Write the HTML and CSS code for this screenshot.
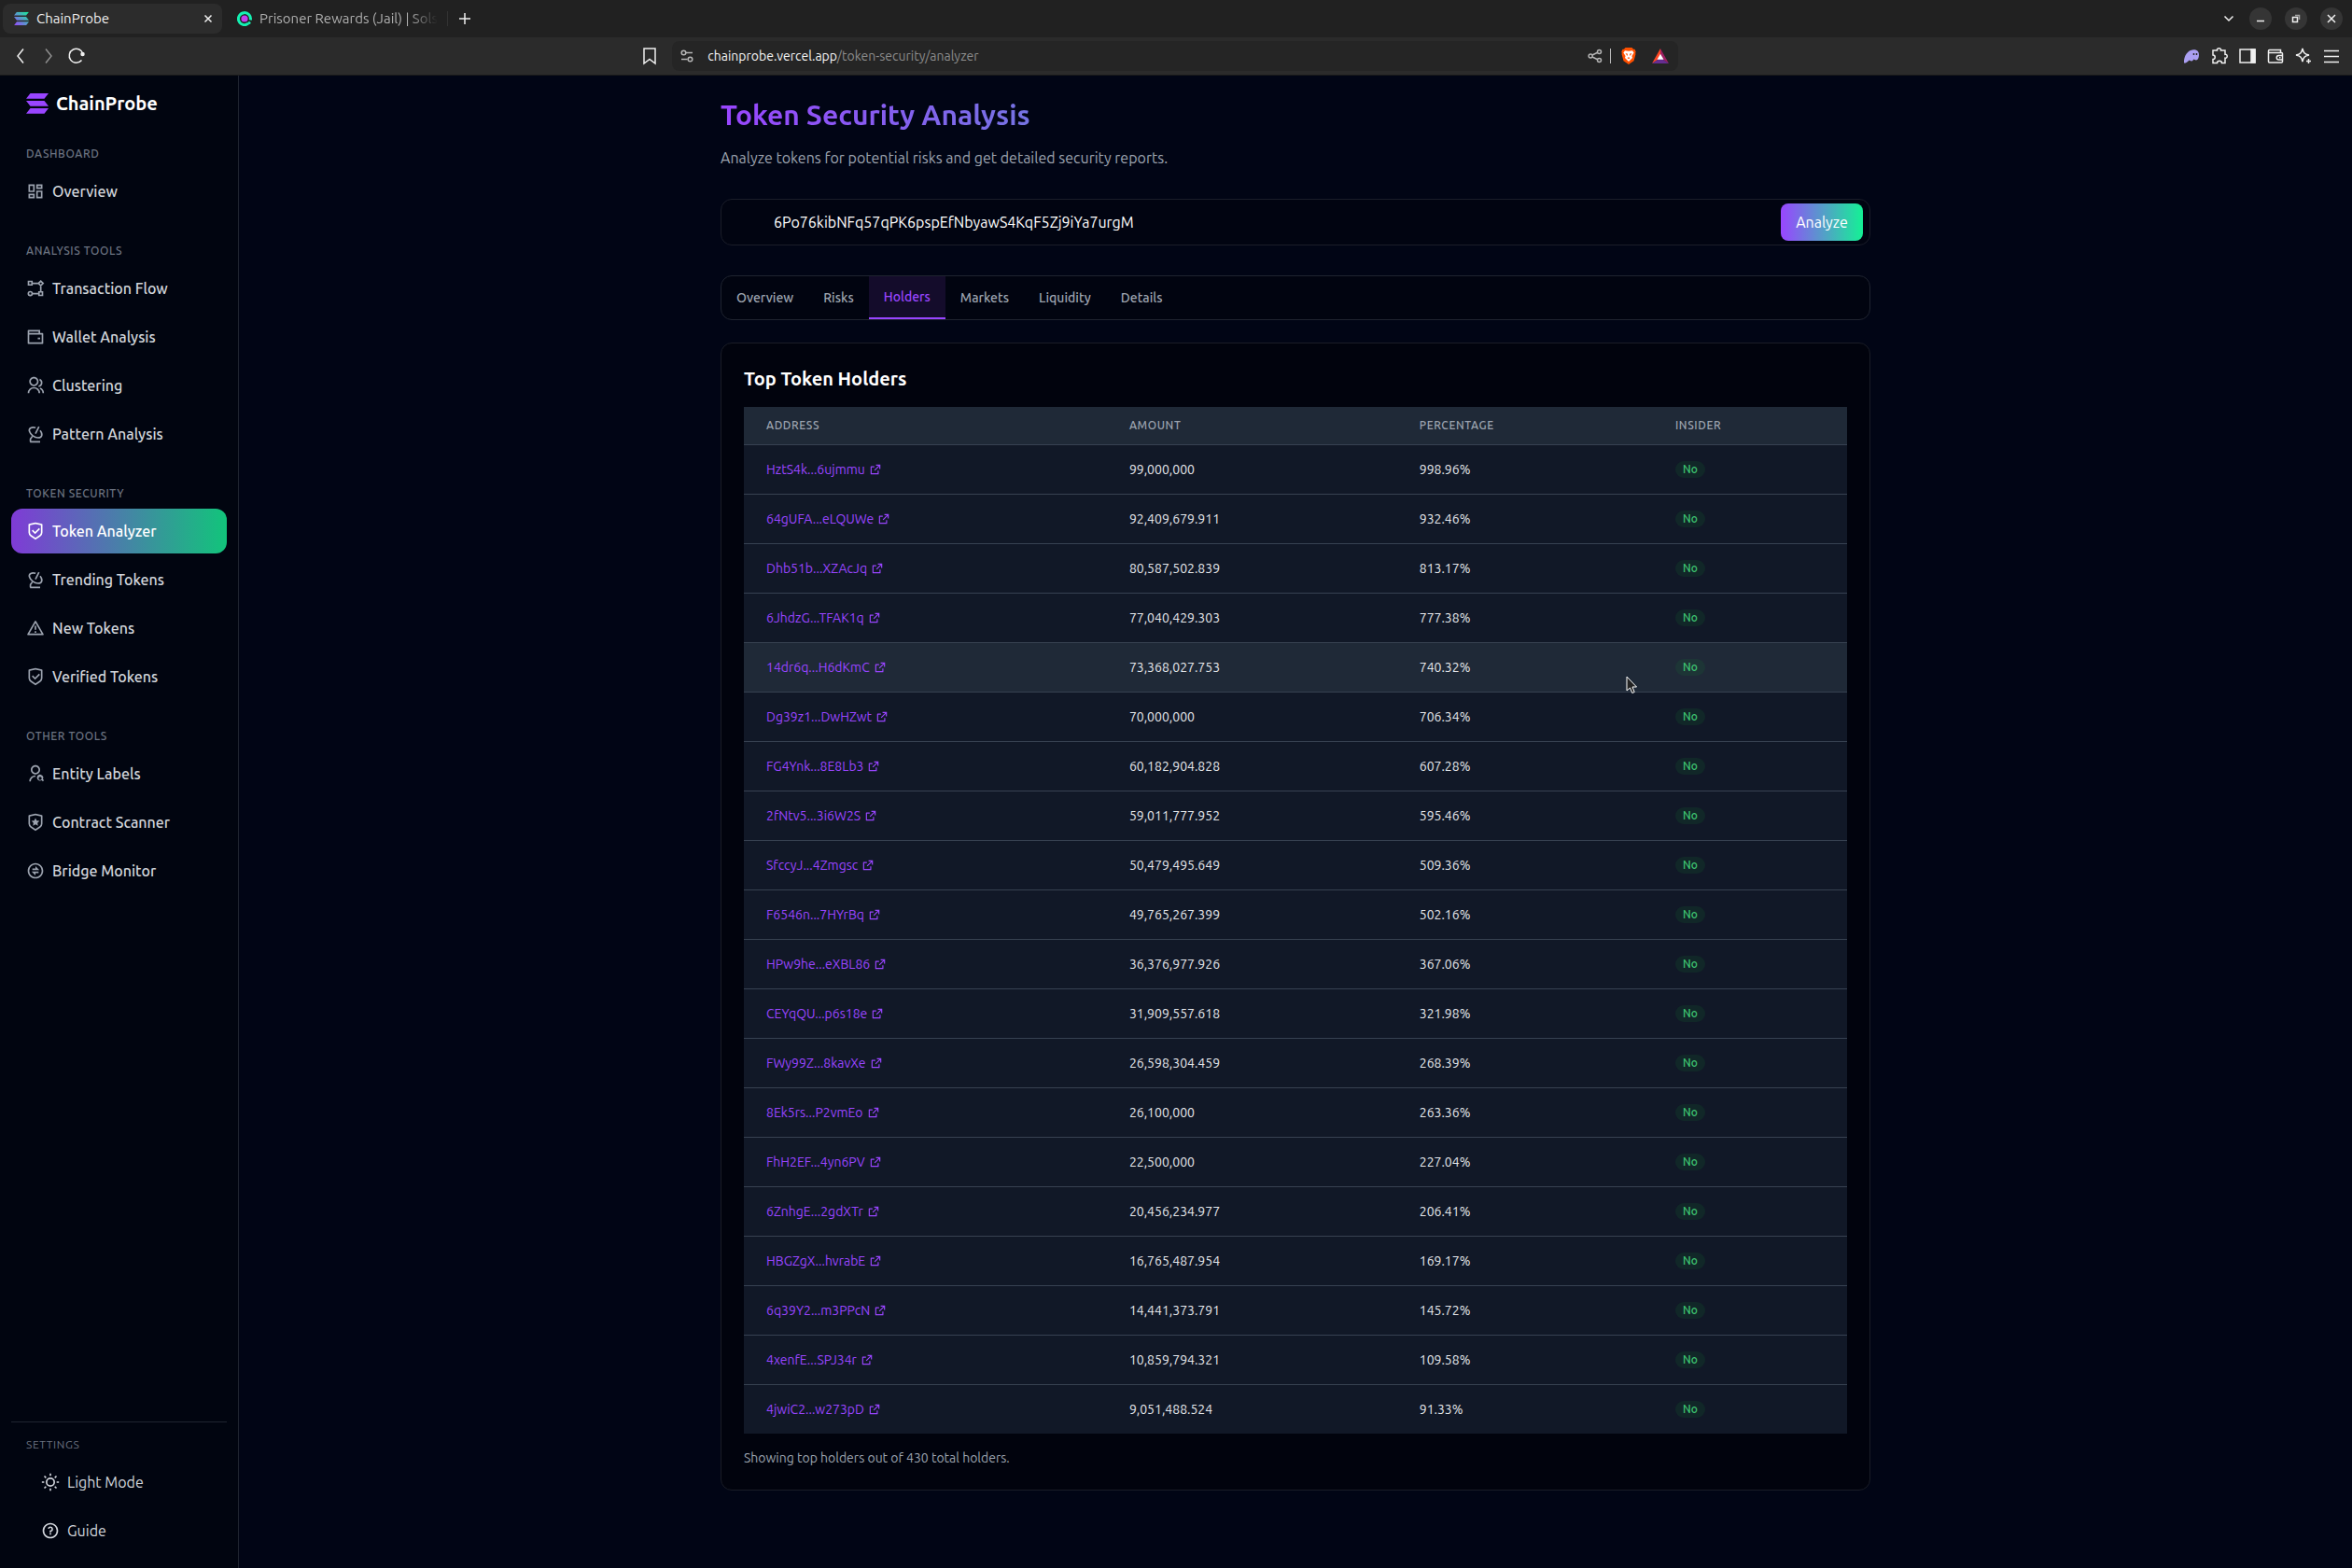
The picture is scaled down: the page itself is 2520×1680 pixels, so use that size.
FILE: index.html
```html
<!DOCTYPE html>
<html lang="en">
<head>
  <meta charset="UTF-8">
  <meta name="viewport" content="width=device-width, initial-scale=1.0">
  <title>ChainProbe</title>
  <link rel="stylesheet" href="styles.css">
</head>
<body>
  <!-- Shared icons -->
  <svg class="sprite" aria-hidden="true">
    <defs>
      <linearGradient id="solana" x1="0" y1="1" x2="1" y2="0">
        <stop offset="0" stop-color="#9945ff"/>
        <stop offset="1" stop-color="#14f195"/>
      </linearGradient>
    </defs>
    <symbol id="i-logo" viewBox="0 0 24 22"><path d="M4.5 0H24l-4.500 5.700H0zM0 8h19.500L24 13.700H4.500zM4.500 16H24l-4.500 5.700H0z"/></symbol>
    <symbol id="i-dashboard" viewBox="0 0 24 24"><path d="M13 21V11h8v10h-8zM3 13V3h8v10H3zm6-2V5H5v6h4zM3 21v-6h8v6H3zm2-2h4v-2H5v2zm10 0h4v-6h-4v6zM13 3h8v6h-8V3zm2 2v2h4V5h-4z"/></symbol>
    <symbol id="i-flow" viewBox="0 0 24 24"><g fill="none" stroke="currentColor" stroke-width="2"><path d="M3 3h4.500v4.500H3zM16.500 16.500H21V21h-4.500zM7.500 5.500h8M18.800 8v8.500M8 18.800h8.500M18.800 2.500l3 3-3 3-3-3z"/><circle cx="5.300" cy="18.700" r="2.500"/></g></symbol>
    <symbol id="i-wallet" viewBox="0 0 24 24"><path d="M18 7h3a1 1 0 0 1 1 1v12a1 1 0 0 1-1 1H3a1 1 0 0 1-1-1V4a1 1 0 0 1 1-1h15v4zM4 9v10h16V9H4zm0-4v2h12V5H4zm11 8h3v2h-3v-2z"/></symbol>
    <symbol id="i-group" viewBox="0 0 24 24"><path d="M2 22a8 8 0 1 1 16 0h-2a6 6 0 1 0-12 0H2zm8-9c-3.315 0-6-2.685-6-6s2.685-6 6-6 6 2.685 6 6-2.685 6-6 6zm0-2c2.210 0 4-1.790 4-4s-1.790-4-4-4-4 1.790-4 4 1.790 4 4 4zm8.284 3.703A8.002 8.002 0 0 1 23 22h-2a6.001 6.001 0 0 0-3.537-5.473l.82-1.824zm-.688-11.290A5.500 5.500 0 0 1 21 8.500a5.499 5.499 0 0 1-5 5.478v-2.013a3.500 3.500 0 0 0 1.041-6.609l.555-1.943z"/></symbol>
    <symbol id="i-radar" viewBox="0 0 24 24"><path fill="none" stroke="currentColor" stroke-width="2" d="M12.200 4C7.500 2.300 3 4.600 4.200 8.500c1.200 4 6.500 8.300 11.200 8.300 4.900 0 6.600-4.300 2.600-9.300M12 11.500l4.500-9M5 22h13M5.500 22v-3.500c0-1 1.500-1 2.300-3.500"/></symbol>
    <symbol id="i-shield" viewBox="0 0 24 24"><path d="M12 1l8.217 1.826a1 1 0 0 1 .783.976v9.987a6 6 0 0 1-2.672 4.992L12 23l-6.328-4.219A6 6 0 0 1 3 13.790V3.802a1 1 0 0 1 .783-.976L12 1zm0 2.049L5 4.604v9.185a4 4 0 0 0 1.781 3.328L12 20.597l5.219-3.480A4 4 0 0 0 19 13.790V4.604L12 3.050zm4.452 5.173l1.415 1.414L11.503 16 7.260 11.757l1.414-1.414 2.828 2.828 4.950-4.950z"/></symbol>
    <symbol id="i-shield-star" viewBox="0 0 24 24"><path d="M12 1l8.217 1.826a1 1 0 0 1 .783.976v9.987a6 6 0 0 1-2.672 4.992L12 23l-6.328-4.219A6 6 0 0 1 3 13.790V3.802a1 1 0 0 1 .783-.976L12 1zm0 2.049L5 4.604v9.185a4 4 0 0 0 1.781 3.328L12 20.597l5.219-3.480A4 4 0 0 0 19 13.790V4.604L12 3.050z"/><path d="M12 6.500l1.600 3.300 3.600.5-2.600 2.500.6 3.600-3.200-1.700-3.200 1.700.6-3.600-2.600-2.500 3.600-.5z"/></symbol>
    <symbol id="i-alert" viewBox="0 0 24 24"><path d="M12.866 3l9.526 16.500a1 1 0 0 1-.866 1.500H2.474a1 1 0 0 1-.866-1.500L11.134 3a1 1 0 0 1 1.732 0zm-8.660 16h15.588L12 5.500 4.206 19zM11 16h2v2h-2v-2zm0-7h2v5h-2V9z"/></symbol>
    <symbol id="i-user-search" viewBox="0 0 24 24"><path d="M12 14v2a6 6 0 0 0-6 6H4a8 8 0 0 1 8-8zm0-1c-3.315 0-6-2.685-6-6s2.685-6 6-6 6 2.685 6 6-2.685 6-6 6zm0-2c2.210 0 4-1.790 4-4s-1.790-4-4-4-4 1.790-4 4 1.790 4 4 4zm9.446 8.032l1.504 1.503-1.415 1.415-1.503-1.504a4 4 0 1 1 1.414-1.414zM18 20a2 2 0 1 0 0-4 2 2 0 0 0 0 4z"/></symbol>
    <symbol id="i-exchange" viewBox="0 0 24 24"><path d="M12 22C6.477 22 2 17.523 2 12S6.477 2 12 2s10 4.477 10 10-4.477 10-10 10zm0-2a8 8 0 1 0 0-16 8 8 0 0 0 0 16zm-5-7h9v2h-4v3l-5-5zm5-4V6l5 5H8V9h4z"/></symbol>
    <symbol id="i-sun" viewBox="0 0 24 24"><path d="M12 18a6 6 0 1 1 0-12 6 6 0 0 1 0 12zm0-2a4 4 0 1 0 0-8 4 4 0 0 0 0 8zM11 1h2v3h-2V1zm0 19h2v3h-2v-3zM3.515 4.929l1.414-1.414L7.050 5.636 5.636 7.050 3.515 4.930zM16.950 18.364l1.414-1.414 2.121 2.121-1.414 1.414-2.121-2.121zm2.121-14.850l1.414 1.415-2.121 2.121-1.414-1.414 2.121-2.121zM5.636 16.950l1.414 1.414-2.121 2.121-1.414-1.414 2.121-2.121zM23 11v2h-3v-2h3zM4 11v2H1v-2h3z"/></symbol>
    <symbol id="i-question" viewBox="0 0 24 24"><path d="M12 22C6.477 22 2 17.523 2 12S6.477 2 12 2s10 4.477 10 10-4.477 10-10 10zm0-2a8 8 0 1 0 0-16 8 8 0 0 0 0 16zm-1-5h2v2h-2v-2zm2-1.645V14h-2v-1.500a1 1 0 0 1 1-1 1.500 1.500 0 1 0-1.471-1.794l-1.962-.393A3.501 3.501 0 1 1 13 13.355z"/></symbol>
    <symbol id="i-link" viewBox="0 0 24 24"><path d="M10 6v2H5v11h11v-5h2v6a1 1 0 0 1-1 1H4a1 1 0 0 1-1-1V7a1 1 0 0 1 1-1h6zm11-3v8h-2V6.413l-7.793 7.794-1.414-1.414L17.585 5H13V3h8z"/></symbol>
  </svg>

  <div class="browser">
    <div class="tab-bar">
      <div class="tab tab-active">
        <svg class="tab-icon" viewBox="0 0 24 22"><use href="#i-logo" fill="url(#solana)"/></svg>
        <span class="tab-title">ChainProbe</span>
        <button class="tab-close" aria-label="Close tab"><svg viewBox="0 0 10 10"><path d="M1.500 1.500l7 7M8.500 1.500l-7 7"/></svg></button>
      </div>
      <div class="tab tab-other">
        <svg class="tab-icon" viewBox="0 0 16 16"><path d="M12 13.200A6.500 6.500 0 1 1 14.300 9.500" fill="none" stroke="#14f1b2" stroke-width="3"/><circle cx="8" cy="8" r="3.600" fill="#c13ff0"/><circle cx="13" cy="12.500" r="1.600" fill="#14f1b2"/></svg>
        <span class="tab-title tab-fade">Prisoner Rewards (Jail) | Sols</span>
      </div>
      <button class="new-tab" aria-label="New tab"><svg viewBox="0 0 12 12"><path d="M6 0v12M0 6h12"/></svg></button>
      <div class="window-controls">
        <button class="chevron" aria-label="Search tabs"><svg viewBox="0 0 12 12"><path d="M1.500 3.500L6 8l4.500-4.500"/></svg></button>
        <button aria-label="Minimize"><svg viewBox="0 0 12 12"><path d="M2 8.500h8"/></svg></button>
        <button aria-label="Restore"><svg viewBox="0 0 12 12"><path d="M2.500 4.500h5v5h-5z"/><path d="M5 2.500h4.500V7" opacity=".6"/></svg></button>
        <button aria-label="Close"><svg viewBox="0 0 12 12"><path d="M2 2l8 8M10 2l-8 8"/></svg></button>
      </div>
    </div>

    <div class="toolbar">
      <div class="toolbar-nav">
        <button aria-label="Back"><svg viewBox="0 0 20 20"><path d="M13 2.500L7 10l6 7.500"/></svg></button>
        <button class="dim" aria-label="Forward"><svg viewBox="0 0 20 20"><path d="M7 2.500l6 7.500-6 7.500"/></svg></button>
        <button aria-label="Reload"><svg viewBox="0 0 20 20"><path d="M15.500 14.500a7.500 7.500 0 1 1 1.500-6.500"/><circle cx="16.500" cy="8" r="1.500" fill="currentColor"/></svg></button>
      </div>
      <div class="toolbar-address">
        <button class="bookmark" aria-label="Bookmark"><svg viewBox="0 0 20 20"><path d="M4 2h12v16l-6-4.500L4 18z"/></svg></button>
        <div class="url-bar">
          <svg class="url-icon" viewBox="0 0 16 16"><circle cx="4.500" cy="4.500" r="2.300"/><path d="M7 4.500h7M2 11.500h6.500"/><circle cx="11.500" cy="11.500" r="2.300"/></svg>
          <div class="url"><span class="url-host">chainprobe.vercel.app</span>/token-security/analyzer</div>
          <svg class="url-icon" viewBox="0 0 16 16"><circle cx="3.200" cy="8" r="2"/><circle cx="12.500" cy="3.500" r="2"/><circle cx="12.500" cy="12.500" r="2"/><path d="M5 7l5.700-2.700M5 9l5.700 2.700"/></svg>
          <span class="url-divider"></span>
          <svg class="brave" viewBox="0 0 16 18"><path d="M4.500 0h7l1.600 1.800h1.400l1.200 2.700-.5 1.500.3 1-2 7.200L8 18l-5.500-3.800L.5 7l.3-1L.3 4.500l1.200-2.700h1.400z" fill="#ff5000"/><path d="M4 3.200l4 .6 4-.6 1.600 2.300-2.200 3.500.6 2L8 15l-4-4 .6-2-2.200-3.500z" fill="#fff"/><path d="M4.500 6l2.500.8L6.500 9zM11.500 6L9 6.800l.5 2.200zM6.500 11L8 10.200 9.500 11 8 12.200z" fill="#ff5000"/></svg>
          <svg class="bat" viewBox="0 0 18 16"><path d="M9 0L0 16l9-6z" fill="#ff4724"/><path d="M9 0l9 16-9-6z" fill="#9e1f63"/><path d="M0 16h18l-9-6z" fill="#662d91"/><path d="M9 5.800l3.500 6h-7z" fill="#fff"/></svg>
        </div>
      </div>
      <div class="toolbar-extensions">
        <button aria-label="Phantom"><svg viewBox="0 0 20 20"><path d="M2 17.500C1.500 10 6 3.500 12 3.200c4.500-.2 6.300 2.600 6 6.300-.2 2.500-1.200 5-3 5-1.500 0-1.600-1-2.200-1-.8 0-1.300 2-2.800 2-1.300 0-1.500-1-2.200-1-1 0-2.300 3.500-5.800 3z" fill="#ab9ff2" stroke="none"/><path d="M12.500 7v2M15.500 7v2" stroke="#2b2b2b"/></svg></button>
        <button aria-label="Extensions"><svg viewBox="0 0 20 20"><path d="M3 4h4.500c-.8-3 4.800-3 4 0H16v4.300c3-.6 3 4.400 0 3.900V17.500h-3.500c0-3-5-3-5 0H3v-4c3 0 3-4.500 0-4.500z"/></svg></button>
        <button aria-label="Side panel"><svg viewBox="0 0 20 20"><path d="M2 3h16v14H2z"/><path d="M14 3h4v14h-4z" fill="currentColor"/></svg></button>
        <button aria-label="Wallet"><svg viewBox="0 0 20 20"><path d="M3 6.500h13.500a1 1 0 0 1 1 1V16a1 1 0 0 1-1 1h-13a1 1 0 0 1-1-1V4.500a1 1 0 0 1 1-1h12v3M17.500 9.500h-4a2 2 0 0 0 0 4.500h4M14 11.700h1.500"/></svg></button>
        <button aria-label="Leo AI"><svg viewBox="0 0 20 20"><path d="M9 2c.8 4.500 2 6 7 7-5 1-6.200 2.500-7 7-.8-4.500-2-6-7-7 5-1 6.200-2.500 7-7zM15.500 13v5M13 15.500h5"/></svg></button>
        <button aria-label="Menu"><svg viewBox="0 0 20 20"><path d="M2 4.500h16M2 10.500h16M2 16.500h16"/></svg></button>
      </div>
    </div>
  </div>

  <div class="app">
    <aside class="sidebar">
      <a class="brand" href="#"><svg class="brand-logo"><use href="#i-logo"/></svg>ChainProbe</a>
      <nav class="nav">
        <section class="nav-section">
          <h3 class="nav-label">Dashboard</h3>
          <a class="nav-item" href="#"><svg class="icon"><use href="#i-dashboard"/></svg>Overview</a>
        </section>
        <section class="nav-section">
          <h3 class="nav-label">Analysis Tools</h3>
          <a class="nav-item" href="#"><svg class="icon"><use href="#i-flow"/></svg>Transaction Flow</a>
          <a class="nav-item" href="#"><svg class="icon"><use href="#i-wallet"/></svg>Wallet Analysis</a>
          <a class="nav-item" href="#"><svg class="icon"><use href="#i-group"/></svg>Clustering</a>
          <a class="nav-item" href="#"><svg class="icon"><use href="#i-radar"/></svg>Pattern Analysis</a>
        </section>
        <section class="nav-section">
          <h3 class="nav-label">Token Security</h3>
          <a class="nav-item active" href="#"><svg class="icon"><use href="#i-shield"/></svg>Token Analyzer</a>
          <a class="nav-item" href="#"><svg class="icon"><use href="#i-radar"/></svg>Trending Tokens</a>
          <a class="nav-item" href="#"><svg class="icon"><use href="#i-alert"/></svg>New Tokens</a>
          <a class="nav-item" href="#"><svg class="icon"><use href="#i-shield"/></svg>Verified Tokens</a>
        </section>
        <section class="nav-section">
          <h3 class="nav-label">Other Tools</h3>
          <a class="nav-item" href="#"><svg class="icon"><use href="#i-user-search"/></svg>Entity Labels</a>
          <a class="nav-item" href="#"><svg class="icon"><use href="#i-shield-star"/></svg>Contract Scanner</a>
          <a class="nav-item" href="#"><svg class="icon"><use href="#i-exchange"/></svg>Bridge Monitor</a>
        </section>
      </nav>
      <div class="settings">
        <h3 class="nav-label">Settings</h3>
        <div class="settings-items">
          <button class="nav-item"><svg class="icon"><use href="#i-sun"/></svg>Light Mode</button>
          <button class="nav-item"><svg class="icon"><use href="#i-question"/></svg>Guide</button>
        </div>
      </div>
    </aside>

    <main class="main">
      <div class="container">
        <h1 class="title">Token Security Analysis</h1>
        <p class="subtitle">Analyze tokens for potential risks and get detailed security reports.</p>

        <form class="search">
          <input class="search-input" type="text" aria-label="Token address" value="6Po76kibNFq57qPK6pspEfNbyawS4KqF5Zj9iYa7urgM">
          <button class="analyze" type="button">Analyze</button>
        </form>

        <div class="tabs">
          <button class="tabs-item">Overview</button>
          <button class="tabs-item">Risks</button>
          <button class="tabs-item selected">Holders</button>
          <button class="tabs-item">Markets</button>
          <button class="tabs-item">Liquidity</button>
          <button class="tabs-item">Details</button>
        </div>

        <section class="card">
          <h2 class="card-title">Top Token Holders</h2>
          <table class="holders">
            <colgroup><col class="col-address"><col class="col-amount"><col class="col-percentage"><col></colgroup>
            <thead>
              <tr><th>Address</th><th>Amount</th><th>Percentage</th><th>Insider</th></tr>
            </thead>
            <tbody>
              <tr><td><a href="#">HztS4k...6ujmmu<svg><use href="#i-link"/></svg></a></td><td>99,000,000</td><td>998.96%</td><td><span class="badge">No</span></td></tr>
              <tr><td><a href="#">64gUFA...eLQUWe<svg><use href="#i-link"/></svg></a></td><td>92,409,679.911</td><td>932.46%</td><td><span class="badge">No</span></td></tr>
              <tr><td><a href="#">Dhb51b...XZAcJq<svg><use href="#i-link"/></svg></a></td><td>80,587,502.839</td><td>813.17%</td><td><span class="badge">No</span></td></tr>
              <tr><td><a href="#">6JhdzG...TFAK1q<svg><use href="#i-link"/></svg></a></td><td>77,040,429.303</td><td>777.38%</td><td><span class="badge">No</span></td></tr>
              <tr class="hovered"><td><a href="#">14dr6q...H6dKmC<svg><use href="#i-link"/></svg></a></td><td>73,368,027.753</td><td>740.32%</td><td><span class="badge">No</span></td></tr>
              <tr><td><a href="#">Dg39z1...DwHZwt<svg><use href="#i-link"/></svg></a></td><td>70,000,000</td><td>706.34%</td><td><span class="badge">No</span></td></tr>
              <tr><td><a href="#">FG4Ynk...8E8Lb3<svg><use href="#i-link"/></svg></a></td><td>60,182,904.828</td><td>607.28%</td><td><span class="badge">No</span></td></tr>
              <tr><td><a href="#">2fNtv5...3i6W2S<svg><use href="#i-link"/></svg></a></td><td>59,011,777.952</td><td>595.46%</td><td><span class="badge">No</span></td></tr>
              <tr><td><a href="#">SfccyJ...4Zmgsc<svg><use href="#i-link"/></svg></a></td><td>50,479,495.649</td><td>509.36%</td><td><span class="badge">No</span></td></tr>
              <tr><td><a href="#">F6546n...7HYrBq<svg><use href="#i-link"/></svg></a></td><td>49,765,267.399</td><td>502.16%</td><td><span class="badge">No</span></td></tr>
              <tr><td><a href="#">HPw9he...eXBL86<svg><use href="#i-link"/></svg></a></td><td>36,376,977.926</td><td>367.06%</td><td><span class="badge">No</span></td></tr>
              <tr><td><a href="#">CEYqQU...p6s18e<svg><use href="#i-link"/></svg></a></td><td>31,909,557.618</td><td>321.98%</td><td><span class="badge">No</span></td></tr>
              <tr><td><a href="#">FWy99Z...8kavXe<svg><use href="#i-link"/></svg></a></td><td>26,598,304.459</td><td>268.39%</td><td><span class="badge">No</span></td></tr>
              <tr><td><a href="#">8Ek5rs...P2vmEo<svg><use href="#i-link"/></svg></a></td><td>26,100,000</td><td>263.36%</td><td><span class="badge">No</span></td></tr>
              <tr><td><a href="#">FhH2EF...4yn6PV<svg><use href="#i-link"/></svg></a></td><td>22,500,000</td><td>227.04%</td><td><span class="badge">No</span></td></tr>
              <tr><td><a href="#">6ZnhgE...2gdXTr<svg><use href="#i-link"/></svg></a></td><td>20,456,234.977</td><td>206.41%</td><td><span class="badge">No</span></td></tr>
              <tr><td><a href="#">HBGZgX...hvrabE<svg><use href="#i-link"/></svg></a></td><td>16,765,487.954</td><td>169.17%</td><td><span class="badge">No</span></td></tr>
              <tr><td><a href="#">6q39Y2...m3PPcN<svg><use href="#i-link"/></svg></a></td><td>14,441,373.791</td><td>145.72%</td><td><span class="badge">No</span></td></tr>
              <tr><td><a href="#">4xenfE...SPJ34r<svg><use href="#i-link"/></svg></a></td><td>10,859,794.321</td><td>109.58%</td><td><span class="badge">No</span></td></tr>
              <tr><td><a href="#">4jwiC2...w273pD<svg><use href="#i-link"/></svg></a></td><td>9,051,488.524</td><td>91.33%</td><td><span class="badge">No</span></td></tr>
            </tbody>
          </table>
          <p class="card-note">Showing top holders out of 430 total holders.</p>
        </section>
      </div>
    </main>
  </div>

  <svg class="cursor" viewBox="0 0 12 20"><path d="M1 1v15l3.500-3 2.300 5.500 2.400-1L7 12h4.500z"/></svg>
</body>
</html>
```
FILE: styles.css
```css
* {
  box-sizing: border-box;
}

body {
  margin: 0;
  height: 100vh;
  display: flex;
  flex-direction: column;
  background: #010515;
  color: #fff;
  font-family: Ubuntu, Roboto, sans-serif;
  font-size: 16px;
  line-height: 24px;
}

h1, h2, h3, p {
  margin: 0;
}

a {
  color: inherit;
  text-decoration: none;
}

button {
  font: inherit;
  color: inherit;
  background: none;
  border: 0;
  padding: 0;
  cursor: pointer;
}

svg {
  display: block;
  flex-shrink: 0;
  fill: currentColor;
}

.sprite {
  position: absolute;
  width: 0;
  height: 0;
}

/* Browser frame */
.browser {
  background: #2b2b2b;
  border-bottom: 1px solid #1a1a1a;
  color: #f0f0f0;
  font-size: 15px;
}

.browser button {
  display: flex;
  align-items: center;
  justify-content: center;
}

.browser button svg {
  fill: none;
  stroke: currentColor;
  stroke-width: 1.5;
}

.tab-bar {
  display: flex;
  align-items: center;
  height: 40px;
  padding: 0 10px 0 3px;
  background: #212121;
}

.tab {
  display: flex;
  align-items: center;
  height: 32px;
  padding: 0 10px 0 12px;
  border-radius: 8px;
}

.tab-active {
  width: 235px;
  background: #2c2c2c;
}

.tab-other {
  width: 237px;
  margin-left: 4px;
  color: #b0b0b0;
}

.tab-icon {
  width: 16px;
  height: 16px;
  margin-right: 8px;
}

.tab-title {
  flex: 1;
  overflow: hidden;
  white-space: nowrap;
}

.tab-fade {
  mask-image: linear-gradient(to right, #000 84%, transparent);
}

.tab-close svg {
  width: 10px;
  height: 10px;
}

.browser .new-tab {
  width: 36px;
  height: 16px;
  border-left: 1px solid #333;
}

.new-tab svg {
  width: 12px;
  height: 12px;
}

.window-controls {
  display: flex;
  gap: 14px;
  margin-left: auto;
}

.window-controls button {
  width: 24px;
  height: 24px;
  border-radius: 50%;
  background: #353535;
}

.window-controls .chevron {
  margin-right: -4px;
  background: none;
}

.window-controls svg {
  width: 12px;
  height: 12px;
}

.toolbar {
  display: grid;
  grid-template-columns: 19fr minmax(0, 1112px) 20fr;
  align-items: center;
  height: 40px;
  padding: 0 12px;
}

.toolbar-nav,
.toolbar-extensions {
  display: flex;
  gap: 10px;
}

.toolbar-extensions {
  justify-content: flex-end;
}

.toolbar button svg {
  width: 20px;
  height: 20px;
}

.dim {
  opacity: 0.5;
}

.toolbar-address {
  display: flex;
  align-items: center;
  gap: 14px;
}

.url-bar {
  flex: 1;
  display: flex;
  align-items: center;
  height: 32px;
  padding: 0 10px 0 8px;
  background: #252525;
  border-radius: 8px;
}

.url-icon {
  width: 16px;
  height: 16px;
  fill: none;
  stroke: #b5b5b5;
  stroke-width: 1.5;
}

.url {
  flex: 1;
  padding-left: 14px;
  font-size: 14px;
  color: #8c8c8c;
}

.url-host {
  color: #f5f5f5;
}

.url-divider {
  width: 1px;
  height: 16px;
  margin: 0 11px 0 8px;
  background: #bdbdbd;
}

.brave {
  width: 16px;
  height: 18px;
  margin-right: 17px;
}

.bat {
  width: 18px;
  height: 16px;
}

/* App */
.app {
  flex: 1;
  display: flex;
  min-height: 0;
}

.sidebar {
  width: 256px;
  flex-shrink: 0;
  display: flex;
  flex-direction: column;
  background: #010510;
  border-right: 1px solid #1f2430;
}

.brand {
  display: flex;
  align-items: center;
  gap: 8px;
  height: 60px;
  padding: 0 28px;
  font-size: 20px;
  font-weight: 700;
}

.brand-logo {
  width: 24px;
  height: 22px;
  color: #9945ff;
}

.nav {
  flex: 1;
  display: flex;
  flex-direction: column;
  gap: 32px;
  padding: 16px 12px;
}

.nav-section,
.settings-items {
  display: flex;
  flex-direction: column;
  gap: 4px;
}

.nav-label {
  margin-bottom: 4px;
  padding: 0 16px;
  font-size: 12px;
  font-weight: 500;
  line-height: 16px;
  letter-spacing: 0.05em;
  text-transform: uppercase;
  color: #6b7280;
}

.nav-item {
  display: flex;
  align-items: center;
  gap: 8px;
  height: 48px;
  padding: 0 16px;
  border-radius: 12px;
  font-weight: 500;
  color: #d1d5db;
}

.icon {
  width: 20px;
  height: 20px;
  color: #9ca3af;
}

.nav-item.active {
  background: linear-gradient(to right, #7f3bd6, #12c47b);
  color: #fff;
}

.active .icon {
  color: #fff;
}

.settings {
  margin: 0 12px;
  padding: 16px 0;
  border-top: 1px solid #1f2430;
}

.settings .nav-label {
  margin-bottom: 8px;
  font-weight: 400;
}

.settings-items {
  padding: 0 16px;
}

.settings .nav-item {
  font-weight: 400;
}

.settings .icon {
  color: #d1d5db;
}

.main {
  flex: 1;
  padding: 24px;
}

.container {
  max-width: 1232px;
  margin: 0 auto;
}

.title {
  margin-bottom: 16px;
  font-size: 30px;
  font-weight: 700;
  line-height: 36px;
  color: transparent;
  background: linear-gradient(to right, #9945ff, #14f195);
  background-clip: text;
}

.subtitle {
  margin-bottom: 32px;
  color: #9ca3af;
}

.search {
  display: flex;
  align-items: center;
  height: 50px;
  margin-bottom: 32px;
  padding-right: 7px;
  background: #010411;
  border: 1px solid #1a1d29;
  border-radius: 12px;
}

.search-input {
  flex: 1;
  height: 100%;
  padding: 0 16px 0 56px;
  font: inherit;
  color: #fff;
  background: none;
  border: 0;
  outline: 0;
}

.analyze {
  width: 88px;
  height: 40px;
  border-radius: 8px;
  background: linear-gradient(to right, #9945ff, #14f195);
}

.tabs {
  display: flex;
  height: 48px;
  margin-bottom: 24px;
  background: #010410;
  border: 1px solid #1f2430;
  border-radius: 12px;
  overflow: hidden;
}

.tabs-item {
  padding: 0 16px;
  font-size: 14px;
  font-weight: 500;
  color: #9ca3af;
}

.tabs-item.selected {
  color: #9945ff;
  background: #140c2b;
  border-bottom: 2px solid #9945ff;
}

.card {
  padding: 24px;
  background: #01030d;
  border: 1px solid #1a1d27;
  border-radius: 12px;
}

.card-title {
  margin-bottom: 16px;
  font-size: 20px;
  font-weight: 600;
  line-height: 28px;
}

.holders {
  width: 100%;
  table-layout: fixed;
  border-spacing: 0;
  font-size: 14px;
  line-height: 20px;
  text-align: left;
  background: #111827;
}

.col-address {
  width: 32.9%;
}

.col-amount {
  width: 26.3%;
}

.col-percentage {
  width: 23.2%;
}

.holders th {
  height: 40px;
  padding: 0 24px;
  font-size: 12px;
  font-weight: 500;
  line-height: 16px;
  letter-spacing: 0.05em;
  text-transform: uppercase;
  color: #9ca3af;
  background: #1f2937;
}

.holders td {
  height: 53px;
  padding: 0 24px;
  border-top: 1px solid #374151;
  color: #e5e7eb;
}

.holders a {
  display: flex;
  align-items: center;
  gap: 4px;
  color: #9945ff;
}

.holders svg {
  width: 14px;
  height: 14px;
}

.hovered {
  background: #1f2937;
}

.badge {
  display: block;
  width: max-content;
  padding: 2px 8px;
  font-size: 12px;
  font-weight: 500;
  line-height: 14px;
  color: #3fc673;
  background: rgba(20, 120, 50, 0.16);
  border-radius: 9px;
}

.card-note {
  margin-top: 16px;
  font-size: 14px;
  line-height: 20px;
  color: #9ca3af;
}

/* Mouse pointer over the table */
.cursor {
  position: absolute;
  left: 1742px;
  top: 724px;
  width: 12px;
  height: 20px;
  fill: #222;
  stroke: #fff;
}
```
